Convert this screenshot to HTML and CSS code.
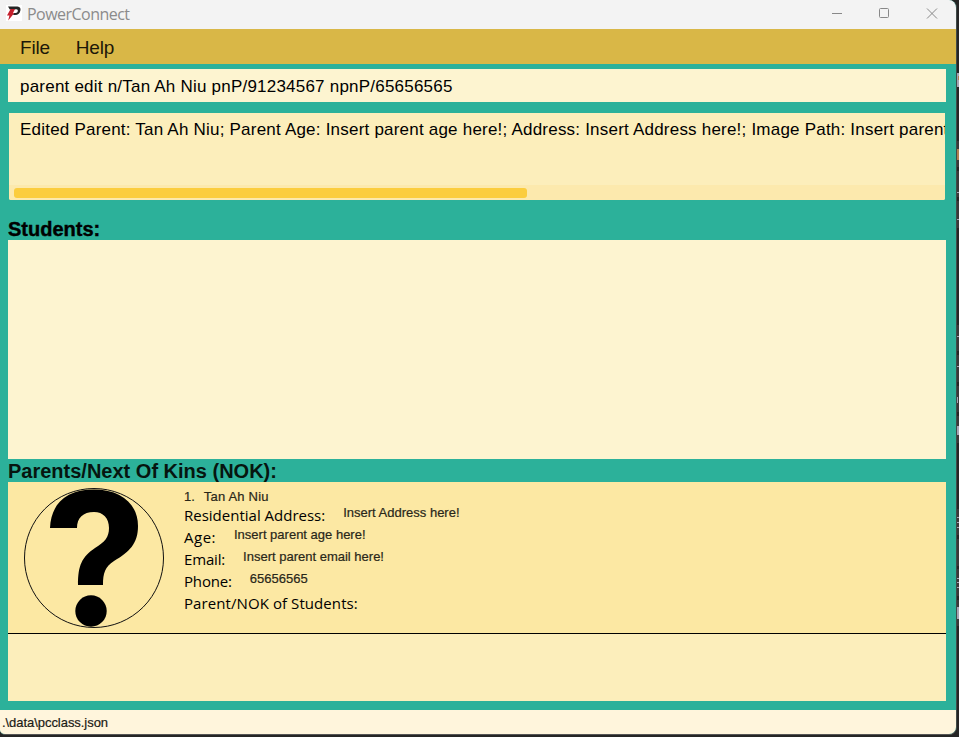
FILE: index.html
```html
<!DOCTYPE html>
<html lang="en">
<head>
<meta charset="utf-8">
<title>PowerConnect</title>
<link rel="stylesheet" href="styles.css">
</head>
<body>
<div class="desktop">
<div class="window">
  <header class="titlebar">
    <svg class="logo" width="16" height="16" viewBox="0 0 16 16"><path fill="#fff" d="M0 0h16v16H0z"/><path fill="#252525" d="M2 1.500h9.500q3.700.5 2.900 4-.8 4.300-5.300 4.600H7l1-2.200h1.700q1.800-.2 2.200-2Q12 4.500 10.500 4.300L3.800 4.500z"/><path fill="#c4202d" d="M4.600 4H9L7 8h1.300L2.200 15.500l1.200-5H1z"/></svg>
    <span class="title">PowerConnect</span>
    <svg class="controls" width="108" height="16" viewBox="0 0 108 16" fill="none" stroke="#888"><path d="M1 5.500h10"/><rect x="48.500" y="0.500" width="9" height="9" rx="1"/><path d="M96 .5l10 10M106 .5l-10 10"/></svg>
  </header>
  <nav class="menu"><span class="file">File</span><span class="help">Help</span></nav>
  <main>
    <div class="command"><span class="t-command">parent edit n/Tan Ah Niu pnP/91234567 npnP/65656565</span></div>
    <div class="result">
      <span class="t-result">Edited Parent: Tan Ah Niu; Parent Age: Insert parent age here!; Address: Insert Address here!; Image Path: Insert parent</span>
      <div class="track"><div class="thumb"></div></div>
    </div>
    <h2 class="h-students"><span>Students:</span></h2>
    <section class="students"></section>
    <h2 class="h-parents"><span>Parents/Next Of Kins (NOK):</span></h2>
    <section class="parents">
      <article class="card">
        <svg class="avatar" width="142" height="142" viewBox="0 0 142 142"><circle cx="71" cy="71" r="69.500" fill="none" stroke="#111"/><path d="M27 41C28 17 43 2.500 71 2.500C98 2.500 115 17 115 39C115 57 106 65 91 74C82 80 80 86 80 98H55C55 78 59 70 72 61C82 55 86 50 86 41C86 31 80 25 71 25C60 25 54 31 54 41Z"/><circle cx="68" cy="124" r="15.700"/></svg>
        <div class="details">
          <div class="name"><span class="num">1.</span><span class="who">Tan Ah Niu</span></div>
          <div class="row"><span class="label l-address">Residential Address:</span><span class="value v-address">Insert Address here!</span></div>
          <div class="row"><span class="label l-age">Age:</span><span class="value v-age">Insert parent age here!</span></div>
          <div class="row"><span class="label l-email">Email:</span><span class="value v-email">Insert parent email here!</span></div>
          <div class="row"><span class="label l-phone">Phone:</span><span class="value v-phone">65656565</span></div>
          <div class="row"><span class="label l-students">Parent/NOK of Students:</span></div>
        </div>
      </article>
    </section>
  </main>
  <footer><span>.\data\pcclass.json</span></footer>
</div>
<svg class="backdrop" width="2" height="737" viewBox="957 0 2 737"><path fill="#252525" d="M957 0h2v737h-2z"/><path fill="#393939" d="M957 141h2v26h-2zM957 171h2v26h-2zM957 201h2v27h-2zM957 325h2v26h-2zM957 355h2v27h-2zM957 386h2v26h-2zM957 416h2v27h-2zM957 509h2v26h-2zM957 539h2v27h-2zM957 569h2v27h-2zM957 600h2v26h-2z"/><path fill="#a5a5b5" d="M957 73h2v14h-2zM957 192h2v1h-2zM957 219h2v1h-2zM957 336h2v1h-2zM957 366h2v1h-2zM957 397h1v6h-1zM957 426h2v9h-2zM957 517h2v1h-2zM957 522h2v1h-2zM957 527h2v1h-2zM957 578h2v1h-2zM957 582h2v1h-2zM957 587h2v1h-2zM957 607h2v12h-2z"/><path fill="#b08050" d="M957 149h2v11h-2zM958 76h1v4h-1z"/></svg>
</div>
</body>
</html>
```
FILE: styles.css
```css
* { box-sizing: border-box; }
body { margin: 0; font-family: "Liberation Sans", Arial, sans-serif; color: #000; overflow: hidden; }
.desktop { display: flex; width: 959px; height: 737px; background: #252525; }
.window { width: 957px; height: 735px; display: flex; flex-direction: column; background: #2cb19a; border-right: 1px solid #414b49; border-bottom: 1px solid #555; border-radius: 0 8px 8px 5px; overflow: hidden; }
span { white-space: nowrap; }
.titlebar { height: 29px; flex: none; background: #f3f3f3; display: flex; align-items: flex-start; padding: 5px 17px 0 6px; }
.title { font: 16px/18px "Open Sans", "Noto Sans", sans-serif; color: #8b8b8b; margin-left: 5px; letter-spacing: -0.53px; }
.controls { margin: 3px 0 0 auto; }
.menu { height: 35px; flex: none; background: #d9b747; padding: 1px 20px 0; font-size: 19px; line-height: 35px; color: #1c1809; display: flex; gap: 26px; letter-spacing: -0.2px; }
main { padding: 5px 10px 0 8px; height: 646px; flex: none; display: flex; flex-direction: column; }
main > * { flex: none; }
.command { height: 33px; background: #fdf4d0; padding-left: 12px; font-size: 17px; line-height: 35px; letter-spacing: 0.216px; }
.result { height: 87px; margin: 11px 1px 0; background: #fceebb; border-radius: 0 0 2px 2px; overflow: hidden; display: flex; flex-direction: column; padding-top: 6px; font-size: 17px; line-height: 21px; letter-spacing: 0.212px; }
.t-result { margin-left: 11px; }
.track { height: 15px; background: #fce9ad; margin-top: auto; padding: 3px 5px 2px; }
.thumb { width: 513px; height: 10px; background: #fbcd3e; border-radius: 3px; }
h2 { margin: 0; font-size: 20px; line-height: 22px; }
.h-students { height: 40px; padding-top: 18px; -webkit-text-stroke: 0.4px #000; }
.students { height: 219px; background: #fdf4d0; }
.h-parents { height: 23px; padding-top: 1px; color: #06150f; }
.parents { height: 219px; background: #fceebb; }
.card { height: 152px; background: #fce8a3; border-bottom: 1px solid #000; display: flex; padding: 5px 0 0 15px; }
.avatar { flex: none; }
.details { margin-left: 19px; }
.name { height: 18px; font-size: 13px; line-height: 19px; color: #292719; display: flex; gap: 9px; }
.who { letter-spacing: 0.2px; }
.name, .value, footer { -webkit-text-stroke: 0.2px #292719; }
.row { display: flex; align-items: flex-start; height: 22px; }
.label { font: 15px/20px "Open Sans", "Noto Sans", sans-serif; }
.l-age { letter-spacing: 0.5px; }
.l-email, .l-phone { letter-spacing: -0.17px; }
.l-students { letter-spacing: 0.08px; }
.value { margin-left: 18px; font-size: 13px; line-height: 15px; color: #292719; }
footer { height: 24px; flex: none; background: #fff5dc; padding-left: 2px; font-size: 13px; line-height: 25px; letter-spacing: -0.05px; color: #171713; }
```
